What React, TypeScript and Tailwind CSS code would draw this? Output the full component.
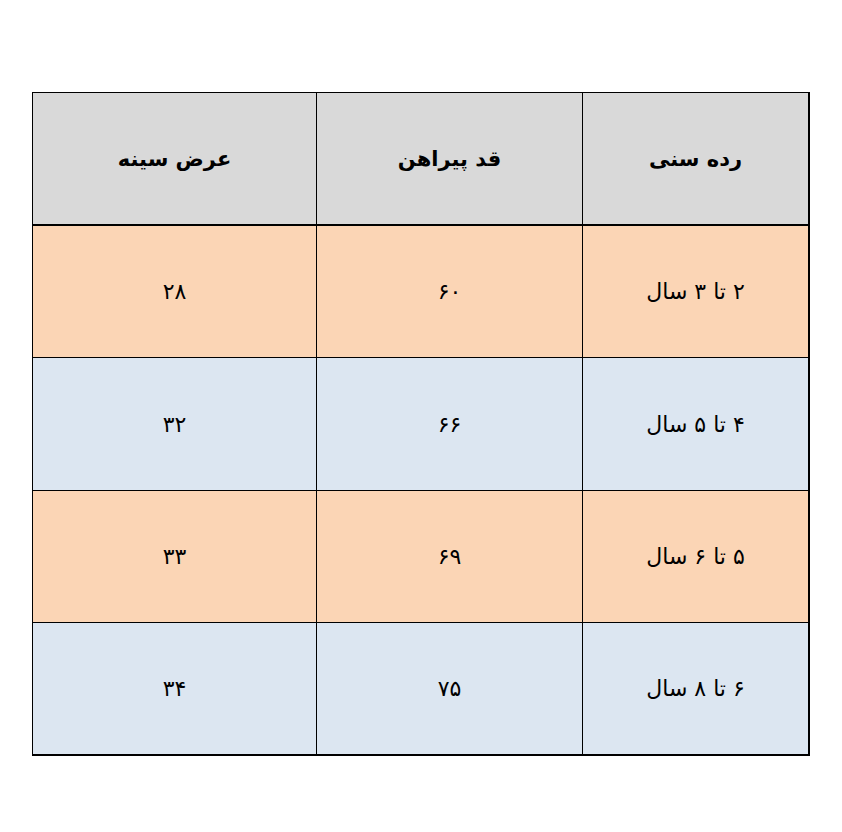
import React from 'react';

const rows = [
  { chest: '۲۸', length: '۶۰', age: '۲ تا ۳ سال', bg: 'bg-[#fbd5b5]', h: 'h-[132px]' },
  { chest: '۳۲', length: '۶۶', age: '۴ تا ۵ سال', bg: 'bg-[#dce6f1]', h: 'h-[133px]' },
  { chest: '۳۳', length: '۶۹', age: '۵ تا ۶ سال', bg: 'bg-[#fbd5b5]', h: 'h-[132px]' },
  { chest: '۳۴', length: '۷۵', age: '۶ تا ۸ سال', bg: 'bg-[#dce6f1]', h: 'h-[131px]' },
];

export default function App() {
  return (
    <div className="min-h-[832px] w-[842px] bg-white pt-[92px] pl-[32px] font-['DejaVu_Sans',sans-serif] text-black">
      <div className="w-[778px] border-t border-l border-r-2 border-b-2 border-black">
        {/* header */}
        <div className="grid h-[133px] grid-cols-[284px_266px_1fr] border-b-2 border-black bg-[#d9d9d9] text-[21px] font-bold">
          <div dir="rtl" className="flex items-center justify-center border-r border-black pt-[2px]">عرض سینه</div>
          <div dir="rtl" className="flex items-center justify-center border-r border-black pt-[2px]">قد پیراهن</div>
          <div dir="rtl" className="flex items-center justify-center pt-[2px]">رده سنی</div>
        </div>
        {rows.map((r, i) => (
          <div key={i} className={`grid grid-cols-[284px_266px_1fr] text-[22px] ${r.bg} ${r.h} ${i < rows.length - 1 ? 'border-b border-black' : ''}`}>
            <div dir="rtl" className="flex items-center justify-center border-r border-black">{r.chest}</div>
            <div dir="rtl" className="flex items-center justify-center border-r border-black">{r.length}</div>
            <div dir="rtl" className="flex items-center justify-center">{r.age}</div>
          </div>
        ))}
      </div>
    </div>
  );
}
